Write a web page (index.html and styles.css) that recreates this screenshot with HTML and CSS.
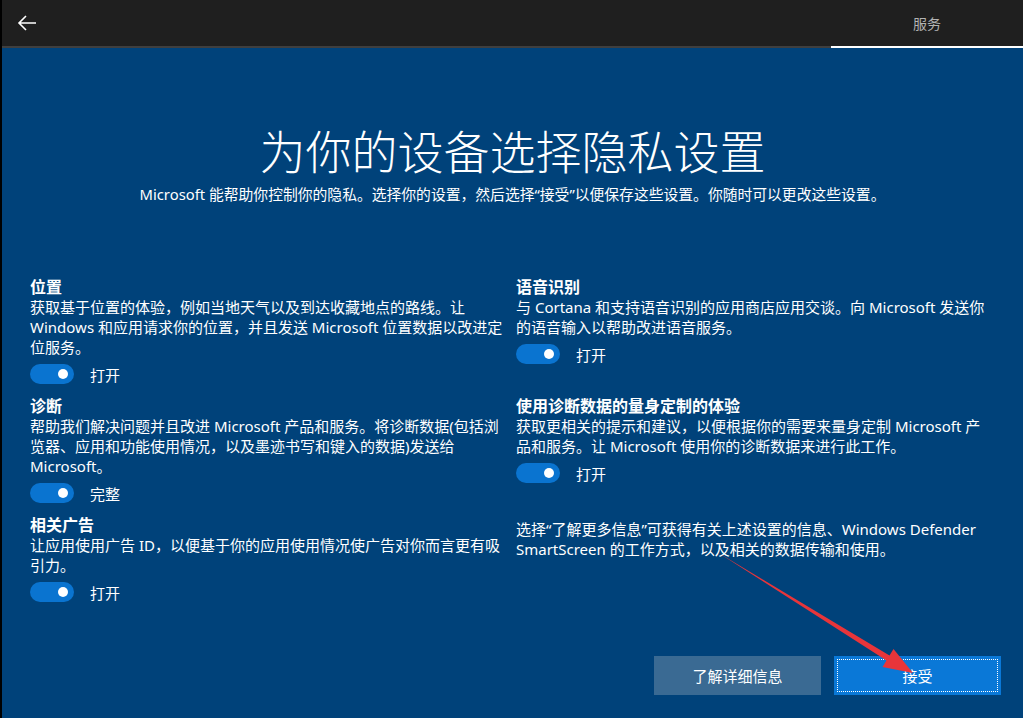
FILE: index.html
```html
<!DOCTYPE html>
<html lang="zh-CN">
<head>
<meta charset="utf-8">
<title>隐私设置</title>
<link rel="stylesheet" href="styles.css">
</head>
<body>
<div class="page">
  <header class="topbar">
    <div class="nav">
      <button class="back" aria-label="返回">
        <svg width="20" height="16" viewBox="0 0 20 16"><path d="M19 8H2M9 1L2 8L9 15" fill="none" stroke="#ffffff" stroke-width="1.6"/></svg>
      </button>
    </div>
    <div class="tab">服务</div>
  </header>
  <main class="content">
    <h1 class="title">为你的设备选择隐私设置</h1>
    <p class="subtitle">Microsoft 能帮助你控制你的隐私。选择你的设置，然后选择“接受”以便保存这些设置。你随时可以更改这些设置。</p>
    <div class="grid">
      <section class="setting">
        <h2>位置</h2>
        <p>获取基于位置的体验，例如当地天气以及到达收藏地点的路线。让 Windows 和应用请求你的位置，并且发送 Microsoft 位置数据以改进定位服务。</p>
        <div class="toggle-row"><span class="toggle"><span class="knob"></span></span><span class="state">打开</span></div>
      </section>
      <section class="setting">
        <h2>语音识别</h2>
        <p>与 Cortana 和支持语音识别的应用商店应用交谈。向 Microsoft 发送你的语音输入以帮助改进语音服务。</p>
        <div class="toggle-row"><span class="toggle"><span class="knob"></span></span><span class="state">打开</span></div>
      </section>
      <section class="setting">
        <h2>诊断</h2>
        <p>帮助我们解决问题并且改进 Microsoft 产品和服务。将诊断数据(包括浏览器、应用和功能使用情况，以及墨迹书写和键入的数据)发送给 Microsoft。</p>
        <div class="toggle-row"><span class="toggle"><span class="knob"></span></span><span class="state">完整</span></div>
      </section>
      <section class="setting">
        <h2>使用诊断数据的量身定制的体验</h2>
        <p>获取更相关的提示和建议，以便根据你的需要来量身定制 Microsoft 产品和服务。让 Microsoft 使用你的诊断数据来进行此工作。</p>
        <div class="toggle-row"><span class="toggle"><span class="knob"></span></span><span class="state">打开</span></div>
      </section>
      <section class="setting">
        <h2>相关广告</h2>
        <p>让应用使用广告 ID，以便基于你的应用使用情况使广告对你而言更有吸引力。</p>
        <div class="toggle-row"><span class="toggle"><span class="knob"></span></span><span class="state">打开</span></div>
      </section>
      <section class="setting note">
        <p>选择“了解更多信息”可获得有关上述设置的信息、Windows Defender SmartScreen 的工作方式，以及相关的数据传输和使用。</p>
      </section>
    </div>
  </main>
  <footer class="actions">
    <button class="btn secondary">了解详细信息</button>
    <button class="btn primary"><span class="focus">接受</span></button>
  </footer>
  <svg class="annotation" width="1023" height="718" viewBox="0 0 1023 718">
    <polygon points="717,552 889.5,655.5 893.5,649 913,673 882.5,667 886.5,660.5" fill="#e8353a"/>
  </svg>
</div>
</body>
</html>
```

FILE: styles.css
```css
* { box-sizing: border-box; }
html, body { margin: 0; padding: 0; }
body {
  width: 1023px;
  height: 718px;
  overflow: hidden;
  background: #00427a;
  font-family: "Noto Sans", "Noto Sans CJK SC", sans-serif;
  color: #ffffff;
}
.page {
  position: relative;
  width: 1023px;
  height: 718px;
  display: flex;
  flex-direction: column;
  border-left: 2px solid #000000;
}
.topbar {
  display: flex;
  height: 48px;
  background: #1f1f1f;
}
.nav {
  flex: 1;
  border-bottom: 2px solid #3f3f3f;
  display: flex;
  align-items: center;
}
.back {
  background: none;
  border: 0;
  padding: 0;
  margin-left: 15px;
  width: 20px;
  height: 16px;
  display: flex;
}
.tab {
  width: 192px;
  border-bottom: 2px solid #ffffff;
  display: flex;
  align-items: center;
  justify-content: center;
  color: #b3b3b3;
  font-size: 14px;
  padding-bottom: 1px;
}
.content {
  flex: 1;
  padding: 75px 0 0 28px;
}
.title {
  margin: 0;
  font-size: 46px;
  line-height: 56px;
  font-weight: 300;
  text-align: center;
  padding-right: 28px;
}
.subtitle {
  margin: 5px 0 0;
  font-size: 14.8px;
  line-height: 20px;
  text-align: center;
  padding-right: 28px;
}
.grid {
  margin-top: 73px;
  display: grid;
  grid-template-columns: 474px 470px;
  column-gap: 12px;
  row-gap: 12px;
  align-items: start;
}
.setting h2 {
  margin: 0;
  font-size: 16px;
  line-height: 20px;
  font-weight: 700;
}
.setting p {
  margin: 0;
  font-size: 15px;
  line-height: 20px;
}
.note p { padding-top: 4px; }
.toggle-row {
  margin-top: 7px;
  height: 20px;
  display: flex;
  align-items: center;
}
.toggle {
  width: 44px;
  height: 20px;
  border-radius: 10px;
  background: #0a74d0;
  position: relative;
  display: inline-block;
}
.knob {
  position: absolute;
  right: 6px;
  top: 5px;
  width: 10px;
  height: 10px;
  border-radius: 50%;
  background: #ffffff;
}
.state {
  margin-left: 16px;
  font-size: 15px;
}
.actions {
  display: flex;
  justify-content: flex-end;
  gap: 13px;
  padding: 0 22px 23px 0;
}
.btn {
  width: 167px;
  height: 39px;
  border: 0;
  color: #ffffff;
  font-family: inherit;
  font-size: 15px;
  padding: 0;
}
.secondary { background: #3a6a93; }
.primary {
  background: #0a78d7;
  padding: 3px;
}
.focus {
  display: flex;
  width: 100%;
  height: 100%;
  align-items: center;
  justify-content: center;
  border: 1px dotted #ffffff;
}
.annotation {
  position: absolute;
  left: -2px;
  top: 0;
  pointer-events: none;
}
```
